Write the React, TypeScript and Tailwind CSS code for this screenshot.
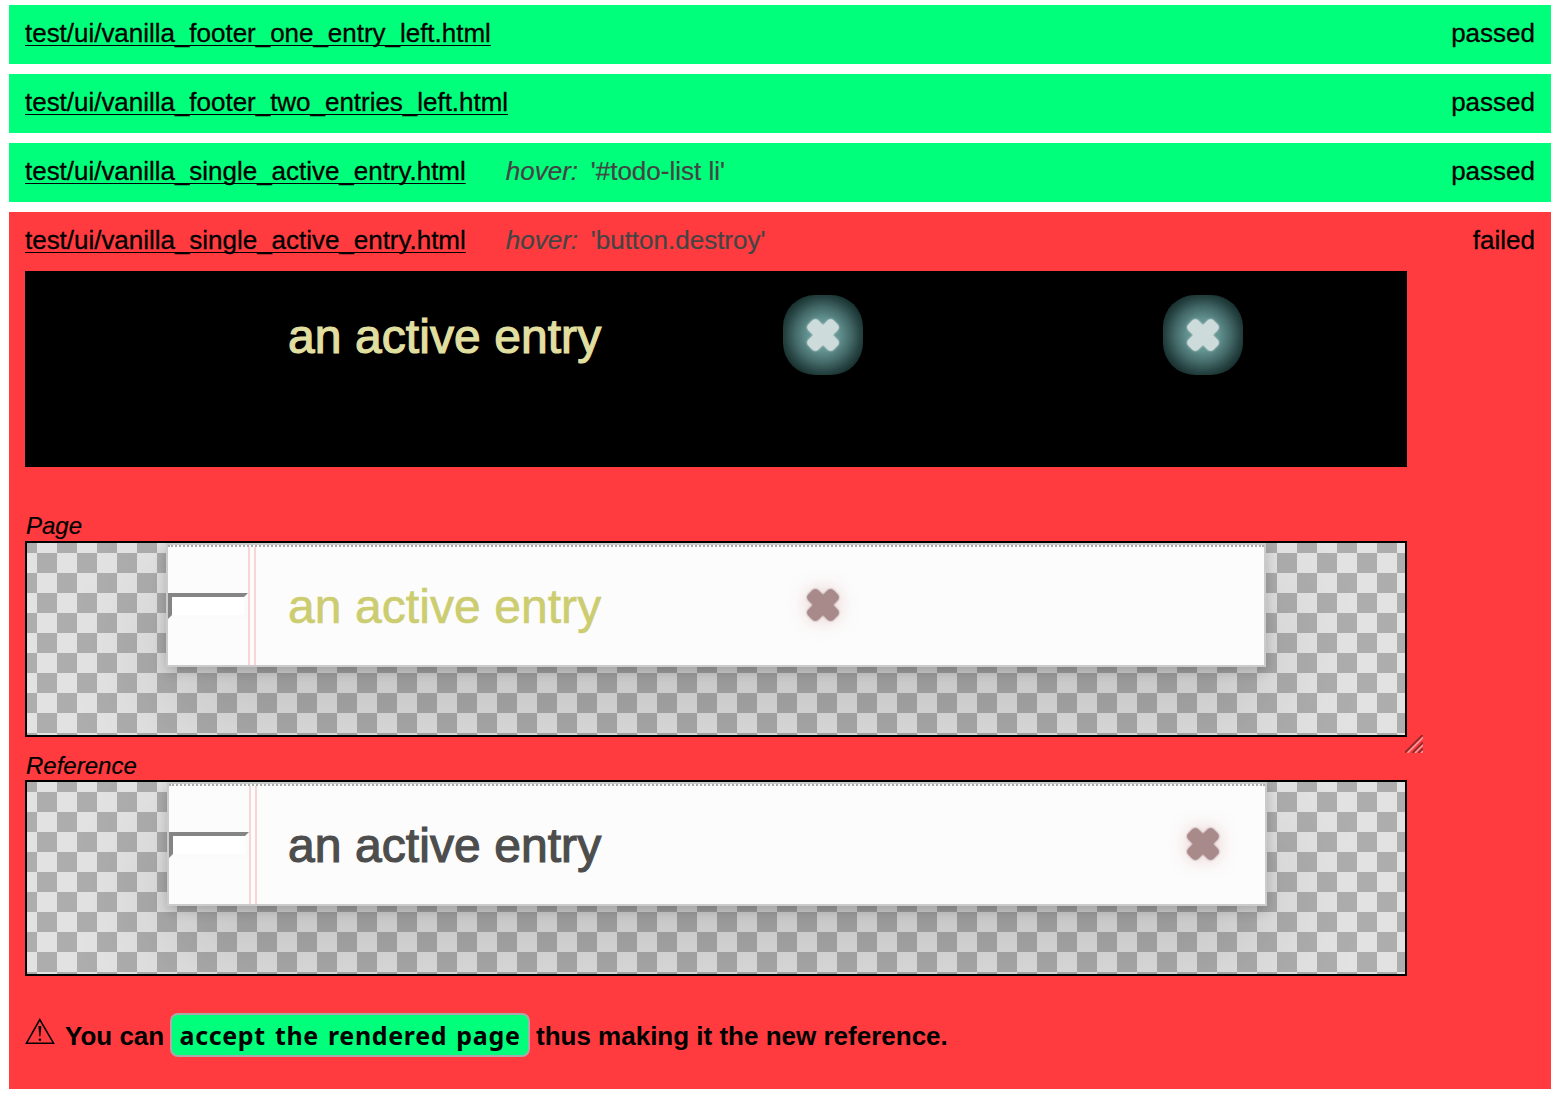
type RowProps = { file: string; hover?: string; status: string };

function Row({ file, hover, status }: RowProps) {
  return (
    <div className="flex h-[59px] items-center px-4 pb-[3px] text-[26px] leading-[30px] whitespace-nowrap text-black">
      <a className="block h-[30px] tracking-[-0.025px] underline decoration-[1px] underline-offset-[3px] [-webkit-text-stroke:0.3px_black] [text-decoration-skip-ink:none]">{file}</a>
      {hover && (
        <span className="ml-10 flex text-[#444] [-webkit-text-stroke:0.2px_#444]">
          <em className="w-[85px]">hover:</em>
          <span>{hover}</span>
        </span>
      )}
      <span className="ml-auto [-webkit-text-stroke:0.3px_black]">{status}</span>
    </div>
  );
}

function Cross({ color, className }: { color: string; className: string }) {
  return (
    <svg viewBox="-20 -20 40 40" className={`size-10 shrink-0 overflow-visible ${className}`} fill={color}>
      <rect x="-17.8" y="-7" width="35.6" height="14" rx="4.2" transform="rotate(45)" />
      <rect x="-17.8" y="-7" width="35.6" height="14" rx="4.2" transform="rotate(-45)" />
    </svg>
  );
}

function Glow() {
  return (
    <div className="mt-6 flex size-20 items-center justify-center rounded-[32px] bg-[radial-gradient(circle_closest-side,#6fa3a1_0%,#629290_40%,#416665_72%,#264342_94%,#1a3332_106%)]">
      <Cross color="#cddbda" className="[filter:drop-shadow(0_0_1px_#cddbda)]" />
    </div>
  );
}

type BoardProps = { ink: string; card: string; crossMargin: string; text: string };

function Board({ ink, card, crossMargin, text }: BoardProps) {
  return (
    <div className="h-[196px] w-[1382px] overflow-hidden border-2 border-black bg-[repeating-conic-gradient(#e2e2e2_0_25%,#adadad_0_50%)] bg-[length:40px_40px] bg-[position:10px_10px]">
      <div className={`flex h-[124px] w-[1100px] border-2 border-[#cbcbcb] bg-[#fcfcfc] shadow-[0_4px_12px_rgba(0,0,0,0.2),0_50px_100px_rgba(0,0,0,0.15)] ${card}`}>
        <div className="flex w-full border-t-2 border-dotted border-[#adadad]">
          <div className="mt-[46px] h-[26px] w-20 shrink-0 border-4 border-t-[#858585] border-r-[#fbfbfb] border-b-[#fbfbfb] border-l-[#858585] bg-white" />
          <div className="h-full w-2 shrink-0 border-x-2 border-[#f8d6d6]" />
          <div className={`w-[314px] shrink-0 text-[48px] leading-[120px] tracking-[0.07px] whitespace-nowrap ${text} ${ink}`}>an active entry</div>
          <Cross color="#a88a8a" className={`mt-[38px] [filter:drop-shadow(0_0_1px_#8a7272)_drop-shadow(0_0_10px_rgba(199,107,107,0.32))] ${crossMargin}`} />
        </div>
      </div>
    </div>
  );
}

export default function App() {
  return (
    <main className="flex h-[1095px] w-[1560px] flex-col gap-[10px] overflow-hidden bg-white px-[9px] pt-[5px] font-['Liberation_Sans',Arial,sans-serif] text-black">
      <section className="bg-[#00ff7b]">
        <Row file="test/ui/vanilla_footer_one_entry_left.html" status="passed" />
      </section>
      <section className="bg-[#00ff7b]">
        <Row file="test/ui/vanilla_footer_two_entries_left.html" status="passed" />
      </section>
      <section className="bg-[#00ff7b]">
        <Row file="test/ui/vanilla_single_active_entry.html" hover="'#todo-list li'" status="passed" />
      </section>
      <section className="h-[877px] bg-[#ff3b3f]">
        <Row file="test/ui/vanilla_single_active_entry.html" hover="'button.destroy'" status="failed" />
        <div className="px-4">
          <div className="flex h-[196px] w-[1382px] bg-black">
            <div className="ml-[263px] w-[495px] text-[48px] leading-[132px] tracking-[0.07px] text-[#e0dfa0] [-webkit-text-stroke:1.2px_#e0dfa0]">an active entry</div>
            <Glow />
            <div className="w-[300px]" />
            <Glow />
          </div>
          <div className="mt-[44px] ml-px h-[30px] text-[24px] leading-[30px] italic [-webkit-text-stroke:0.2px_black]">Page</div>
          <div className="flex items-end">
            <Board ink="text-[#cccc70] [-webkit-text-stroke:0.6px_#cccc70]" card="ml-[139px]" text="ml-8" crossMargin="ml-[201px]" />
            <svg className="-mb-4 -ml-[2px] size-[18px]" viewBox="0 0 18 18" fill="none">
              <path d="M-.5 18 18 -.5M7.5 18 18 7.5M13.5 18 18 13.5" stroke="#8e2b2e" strokeWidth="1.8" />
              <path d="M2.5 18 18 2.5M10 18 18 10M16 18l2-2" stroke="#f6a5a7" strokeWidth="1.4" />
            </svg>
          </div>
          <div className="mt-[14px] ml-px h-[29px] text-[24px] leading-[30px] italic [-webkit-text-stroke:0.2px_black]">Reference</div>
          <Board ink="text-[#4d4d4d] [-webkit-text-stroke:1.2px_#4d4d4d]" card="ml-[140px]" text="ml-[31px]" crossMargin="ml-[581px]" />
          <div className="mt-[37px] flex h-11 items-center text-[26px] font-bold whitespace-nowrap">
            <svg className="mb-2 size-[30px]" viewBox="0 0 30 30" fill="none" stroke="#000" strokeWidth="1.6">
              <path d="M1.5 27.2 14.8 3.5 28.5 27.2Z" />
              <path d="M13.4 10h3l-1 10.5h-1Z" fill="#000" stroke="none" />
              <circle cx="14.9" cy="23.8" r="1.3" fill="#000" stroke="none" />
            </svg>
            <span className="mt-[2px] ml-[10px] w-[105px]">You can</span>
            <button className="h-11 w-[360px] rounded-[8px] border-2 border-[#a9a9a9] bg-[#00ff7b] text-center font-['Noto_Sans',sans-serif] text-[25px] leading-[40px] font-bold tracking-[0.65px] [word-spacing:2px]">accept the rendered page</button>
            <span className="mt-[2px] ml-[6px]">thus making it the new reference.</span>
          </div>
        </div>
      </section>
    </main>
  );
}
